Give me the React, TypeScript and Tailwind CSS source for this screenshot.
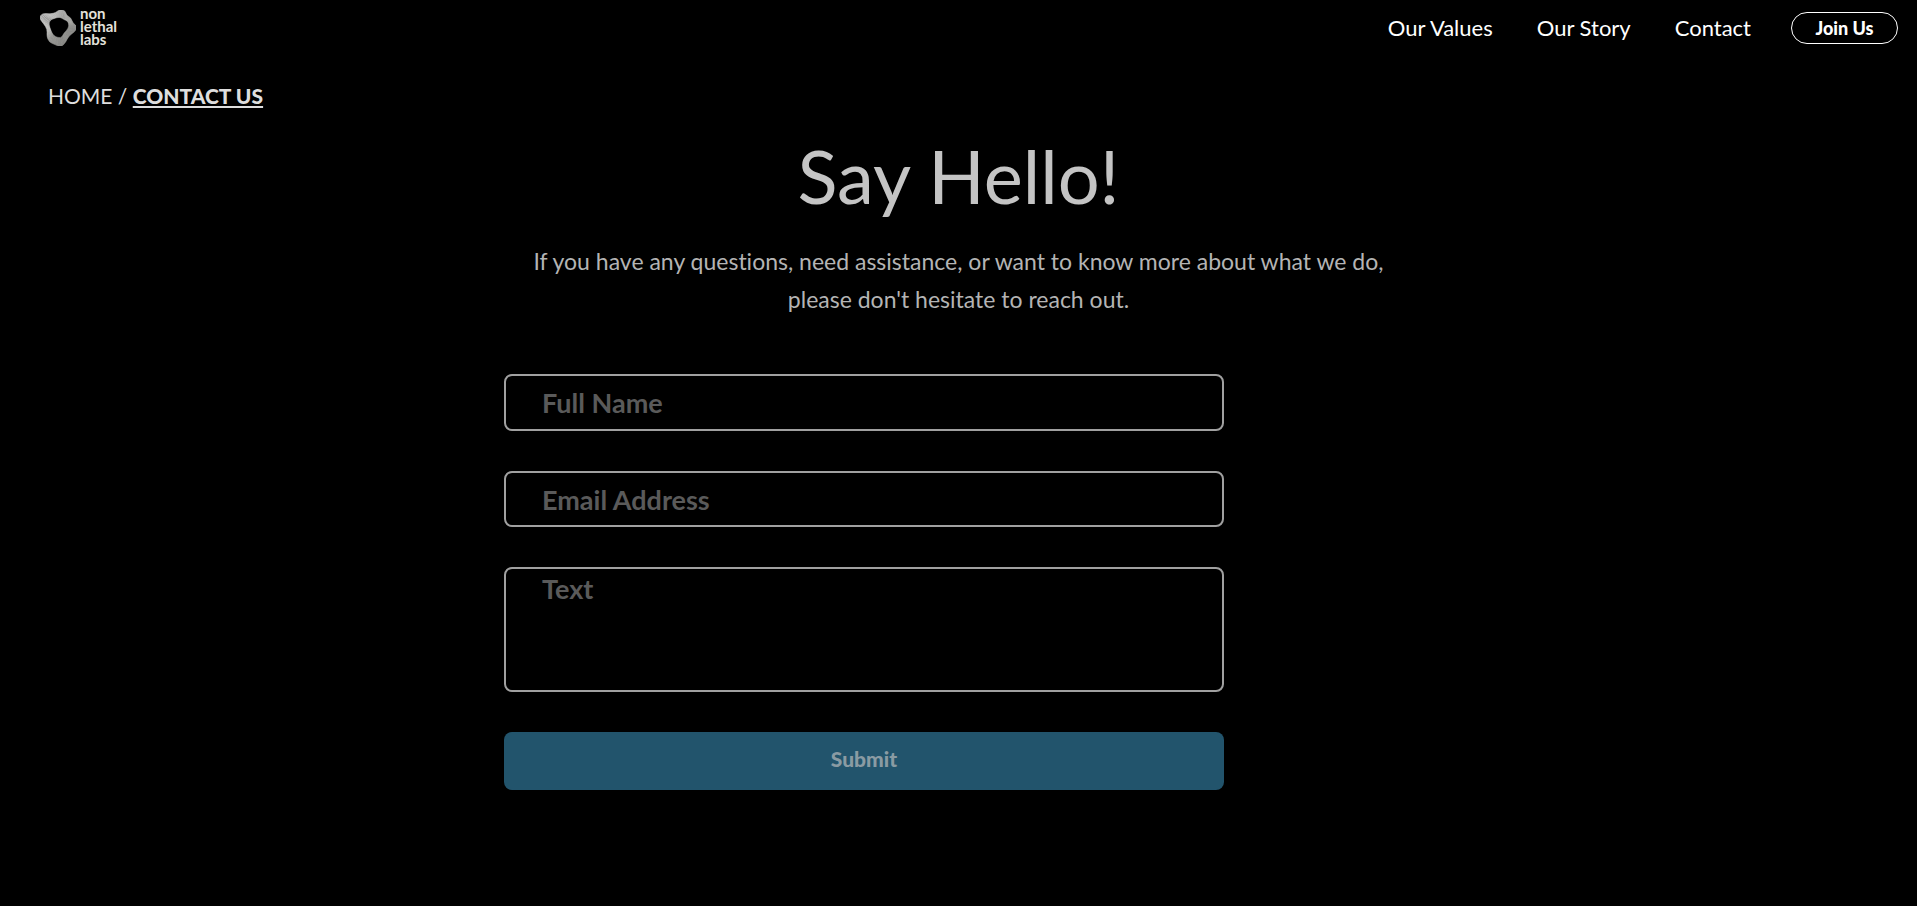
import React from 'react';

type Point = [number, number];

const outer: Point[] = [
  [8, 34], [18, 19], [42, 22], [58, 18], [70, 8], [87, 12], [90, 26], [104, 33], [109, 49],
  [124, 60], [116, 75], [96, 89], [89, 106], [74, 122], [56, 114], [38, 106], [31, 88], [33, 68], [21, 50],
];
const inner: Point[] = [
  [38, 47], [44, 39], [52, 36], [61, 33], [69, 32], [76, 34], [83, 39], [92, 42], [97, 50],
  [97, 61], [91, 71], [83, 79], [79, 87], [73, 93], [63, 92], [54, 88], [47, 79], [43, 69], [39, 58],
];

function ring(t: number): string {
  const pts = outer.map(([x, y], i): Point => [
    x + (inner[i][0] - x) * t,
    y + (inner[i][1] - y) * t,
  ]);
  const mid = (a: Point, b: Point) => `${((a[0] + b[0]) / 2).toFixed(1)} ${((a[1] + b[1]) / 2).toFixed(1)}`;
  const last = pts[pts.length - 1];
  const curves = pts.map((p, i) => `Q${p[0].toFixed(1)} ${p[1].toFixed(1)} ${mid(p, pts[(i + 1) % pts.length])}`);
  return `M${mid(last, pts[0])}${curves.join('')}Z`;
}

const rings = Array.from({ length: 9 }, (_, i) => ring(i / 8));

function Logo() {
  return (
    <a href="#" className="flex items-center gap-1 text-[#e4e2dc]">
      <svg viewBox="11 10 108 108" className="size-9" fill="none" aria-hidden="true">
        <defs>
          <linearGradient id="mesh" x1="0" y1="0" x2="1" y2="1">
            <stop offset="0" stopColor="#ffffff" />
            <stop offset="0.5" stopColor="#d4d4d0" />
            <stop offset="1" stopColor="#a6a6a2" />
          </linearGradient>
        </defs>
        <path d={rings[0] + rings[8]} fill="url(#mesh)" fillOpacity="0.6" fillRule="evenodd" />
        {rings.map((d) => (
          <path key={d} d={d} stroke="url(#mesh)" strokeWidth="1.2" />
        ))}
      </svg>
      <span className="pb-1 text-[15px] leading-[13px] font-bold">
        non
        <br />
        lethal
        <br />
        labs
      </span>
    </a>
  );
}

const field =
  'block w-full rounded-lg border-2 border-[#a0a0a0] bg-black px-9 text-[27px] font-bold text-[#c4c4c4] placeholder:text-[#5a5a5a] placeholder:opacity-100';

export default function App() {
  return (
    <div className="min-h-screen bg-black font-['Lato',sans-serif] text-[#c4c4c4] [font-variant-ligatures:none]">
      <header className="flex h-14 items-center justify-between pr-[19px] pl-10">
        <Logo />
        <nav className="flex items-center text-[22px] text-white">
          <div className="flex gap-11 pr-10 pb-0.5">
            <a href="#values">Our Values</a>
            <a href="#story">Our Story</a>
            <a href="#contact">Contact</a>
          </div>
          <button type="button" className="h-8 w-[107px] rounded-full border border-white text-[18px] font-black">
            Join Us
          </button>
        </nav>
      </header>

      <nav aria-label="Breadcrumb" className="px-12 pt-6 text-[21px] leading-8 text-[#dedede]">
        <a href="#home">HOME</a> /{' '}
        <a href="#contact" className="font-black underline decoration-2 underline-offset-2">CONTACT US</a>
      </nav>

      <main className="mx-auto max-w-[909px]">
        <div className="text-center">
          <h1 className="pt-[18px] text-[74px] leading-[92px]">Say Hello!</h1>
          <p className="pt-5 text-[23px] leading-[38px] text-[#b4b4b4]">
            If you have any questions, need assistance, or want to know more about what we do,
            <br />
            please don't hesitate to reach out.
          </p>
        </div>

        <form className="flex max-w-[720px] flex-col gap-10 pt-14" onSubmit={(e) => e.preventDefault()}>
          <input type="text" aria-label="Full Name" placeholder="Full Name" className={`${field} h-[57px]`} />
          <input type="email" aria-label="Email Address" placeholder="Email Address" className={`${field} h-[56px]`} />
          <textarea aria-label="Text" placeholder="Text" className={`${field} h-[125px] resize-none py-1 leading-8`} />
          <button type="submit" className="h-[58px] rounded-lg bg-[#22546c] pb-1 text-[21px] font-black text-[#8a9ba3]">
            Submit
          </button>
        </form>
      </main>
    </div>
  );
}
